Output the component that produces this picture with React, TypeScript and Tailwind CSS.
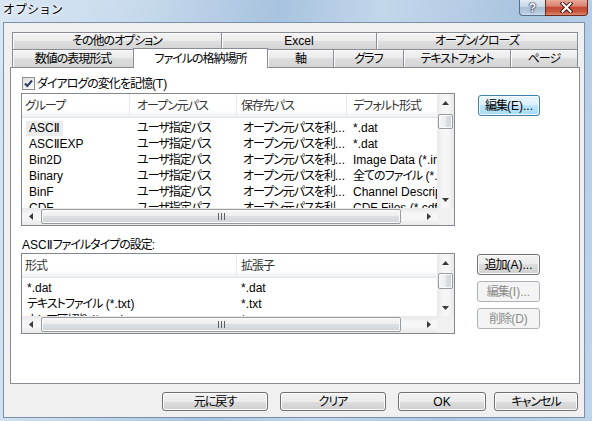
import React from "react";

const F = "font-['Liberation_Sans','Noto_Sans_CJK_JP',sans-serif] [font-feature-settings:'palt'] text-[12px] text-black";

function T({ s }: { s: string }) {
  const parts = s.split(/([\u3000-\u30ff\u4e00-\u9fff\uff01-\uff5e]+)/);
  return (
    <>
      {parts.map((p, i) =>
        i % 2 === 1 ? (
          <span key={i} className="tracking-[-1px]">
            {p}
          </span>
        ) : p.includes("Ⅱ") ? (
          <React.Fragment key={i}>
            {p.split("Ⅱ").map((q, j, arr) => (
              <React.Fragment key={j}>
                {q}
                {j < arr.length - 1 && (
                  <span className="font-['DejaVu_Sans',sans-serif] text-[12px] [font-feature-settings:normal]">Ⅱ</span>
                )}
              </React.Fragment>
            ))}
          </React.Fragment>
        ) : (
          p
        )
      )}
    </>
  );
}

function ArrowUp() {
  return (
    <svg width="7" height="4" viewBox="0 0 7 4">
      <path d="M0 4 L3.5 0 L7 4 Z" fill="#3a3a3a" />
    </svg>
  );
}
function ArrowDown() {
  return (
    <svg width="7" height="4" viewBox="0 0 7 4">
      <path d="M0 0 L3.5 4 L7 0 Z" fill="#3a3a3a" />
    </svg>
  );
}
function ArrowLeft() {
  return (
    <svg width="4" height="7" viewBox="0 0 4 7">
      <path d="M4 0 L0 3.5 L4 7 Z" fill="#3a3a3a" />
    </svg>
  );
}
function ArrowRight() {
  return (
    <svg width="4" height="7" viewBox="0 0 4 7">
      <path d="M0 0 L4 3.5 L0 7 Z" fill="#3a3a3a" />
    </svg>
  );
}

function VScroll({ thumb }: { thumb: string }) {
  return (
    <div className="w-[17px] h-full flex flex-col bg-[linear-gradient(90deg,#e8e8e8,#f6f6f6_35%,#f6f6f6_65%,#e8e8e8)]">
      <div className="h-[17px] shrink-0 flex items-center justify-center">
        <ArrowUp />
      </div>
      <div className="flex-1 flex flex-col items-center">
        <div
          className={`w-[15px] shrink-0 ${thumb} rounded-[2px] border border-[#979ca3] bg-[linear-gradient(90deg,#f7f7f7,#ececec_50%,#dcdfe3_50%,#d0d4d9)] shadow-[inset_0_0_0_1px_#fafafa]`}
        />
      </div>
      <div className="h-[17px] shrink-0 flex items-center justify-center">
        <ArrowDown />
      </div>
    </div>
  );
}

function HScroll() {
  return (
    <div className="flex-1 h-full flex bg-[linear-gradient(#e8e8e8,#f6f6f6_35%,#f6f6f6_65%,#e8e8e8)]">
      <div className="w-[17px] flex items-center justify-center">
        <ArrowLeft />
      </div>
      <div className="flex-1 flex items-center">
        <div className="ml-[2px] w-[360px] h-[15px] rounded-[2px] border border-[#979ca3] bg-[linear-gradient(#f7f7f7,#ececec_50%,#dcdfe3_50%,#d0d4d9)] shadow-[inset_0_0_0_1px_#fafafa] flex items-center justify-center gap-[2px]">
          <span className="w-[1px] h-[7px] bg-[#606060]" />
          <span className="w-[1px] h-[7px] bg-[#606060]" />
          <span className="w-[1px] h-[7px] bg-[#606060]" />
        </div>
      </div>
      <div className="w-[17px] flex items-center justify-center">
        <ArrowRight />
      </div>
    </div>
  );
}

const headerBg =
  "h-[24px] shrink-0 flex bg-[linear-gradient(#ffffff,#ffffff_72%,#eef0f3)] border-b border-[#e2e5ea] text-[#333]";

function Btn({
  children,
  variant = "normal",
  className = "",
}: {
  children: React.ReactNode;
  variant?: "normal" | "focused" | "disabled";
  className?: string;
}) {
  const v =
    variant === "focused"
      ? "border-[#3c7fb1] bg-[linear-gradient(#eaf6fd,#d9f0fc_50%,#bee6fd_50%,#a7d9f5)] shadow-[inset_0_0_0_1px_#f4fbff] text-black"
      : variant === "disabled"
      ? "border-[#adb2b5] bg-[#f4f4f4] text-[#8a8a8a]"
      : "border-[#707070] bg-[linear-gradient(#f2f2f2,#ebebeb_50%,#dddddd_50%,#cfcfcf)] shadow-[inset_0_0_0_1px_#fbfbfb] text-black";
  return (
    <div className={`rounded-[3px] border flex items-center justify-center leading-none whitespace-nowrap ${v} ${className}`}>
      {children}
    </div>
  );
}

function Tab({ label, className }: { label: string; className: string }) {
  return (
    <div
      className={`h-full flex items-center justify-center border border-b-0 border-[#898c95] bg-[linear-gradient(#f3f3f3,#ebebeb_50%,#dedede_50%,#d4d4d4)] shadow-[inset_1px_1px_0_#fdfdfd] leading-none whitespace-nowrap ${className}`}
    >
      <T s={label} />
    </div>
  );
}

const rows1 = [
  ["ASCⅡ", "ユーザ指定パス", "オープン元パスを利...", "*.dat"],
  ["ASCⅡEXP", "ユーザ指定パス", "オープン元パスを利...", "*.dat"],
  ["Bin2D", "ユーザ指定パス", "オープン元パスを利...", "Image Data (*.img)"],
  ["Binary", "ユーザ指定パス", "オープン元パスを利...", "全てのファイル (*.*)"],
  ["BinF", "ユーザ指定パス", "オープン元パスを利...", "Channel Description"],
  ["CDF", "ユーザ指定パス", "オープン元パスを利...", "CDF Files (*.cdf)"],
];

const rows2 = [
  ["*.dat", "*.dat"],
  ["テキストファイル (*.txt)", "*.txt"],
  ["カンマ区切り (*.csv)", "*.csv"],
];

export default function App() {
  return (
    <div
      className={`w-[592px] h-[421px] flex flex-col overflow-hidden bg-[linear-gradient(100deg,#d9e6f3_0%,#c6d9ec_22%,#a8c3df_42%,#c3d7eb_58%,#abc5e0_78%,#c0d5ea_100%)] ${F}`}
    >
      {/* Title bar */}
      <div className="h-[22px] shrink-0 flex items-start">
        <div className="pl-[3px] pt-[1px] leading-[16px] text-[12px] [font-feature-settings:normal] font-['Noto_Sans_CJK_JP',sans-serif] [text-shadow:0_0_5px_#fff,0_0_3px_#fff]">
          オプション
        </div>
        <div className="flex-1" />
        <div className="flex mr-[4px]">
          <div className="w-[26px] h-[16px] rounded-bl-[4px] border border-t-0 border-r-0 border-[#5a6f8c] bg-[linear-gradient(#e3ebf4,#c9d7e7_45%,#aabfd6_50%,#b3c8de_80%,#cddcec)] flex items-center justify-center">
            <span className="text-white font-bold text-[12px] leading-none font-['Liberation_Sans',sans-serif] [text-shadow:0_0_1px_#223,0_0_1px_#223,0_0_2px_#223]">
              ?
            </span>
          </div>
          <div className="w-[43px] h-[16px] rounded-br-[4px] border border-t-0 border-[#6b2a20] bg-[linear-gradient(#e8a898,#d98470_40%,#c64a34_50%,#c5533b_75%,#df8a6c)] flex items-center justify-center">
            <svg width="13" height="11" viewBox="0 0 13 11">
              <path d="M2.5 1.5 L10.5 9.5 M10.5 1.5 L2.5 9.5" stroke="#4a1710" strokeWidth="4" strokeLinecap="square" />
              <path d="M2.5 1.5 L10.5 9.5 M10.5 1.5 L2.5 9.5" stroke="#ffffff" strokeWidth="2" strokeLinecap="square" />
            </svg>
          </div>
        </div>
      </div>

      {/* Client area */}
      <div className="ml-[3px] mr-[7px] h-[396px] shrink-0 border border-[#7a8fa8] bg-[#f0f0f0] flex flex-col pt-[9px] pl-[6px] pr-[4px]">
        {/* Tabs */}
        <div className="ml-[2px] flex flex-col shrink-0">
          <div className="h-[17px] flex">
            <Tab label="その他のオプション" className="w-[210px]" />
            <Tab label="Excel" className="w-[156px] -ml-px" />
            <Tab label="オープン/クローズ" className="w-[202px] -ml-px" />
          </div>
          <div className="h-[18px] flex items-end">
            <Tab label="数値の表現形式" className="w-[122px]" />
            <div className="relative z-10 w-[135px] h-[20px] -ml-px mb-[-1px] border border-b-0 border-[#898c95] bg-white flex items-center justify-center leading-none">
              <T s="ファイルの格納場所" />
            </div>
            <Tab label="軸" className="w-[67px] -ml-px" />
            <Tab label="グラフ" className="w-[71px] -ml-px" />
            <Tab label="テキストフォント" className="w-[108px] -ml-px" />
            <Tab label="ページ" className="w-[68px] -ml-px" />
          </div>
        </div>

        {/* Panel */}
        <div className="h-[317px] shrink-0 border border-[#898c95] bg-white flex flex-col pl-[10px] pt-[9px]">
          <div className="h-[13px] shrink-0 flex items-center ml-[1px]">
            <div className="w-[13px] h-[13px] border border-[#8e8f8f] bg-[linear-gradient(135deg,#dedede,#fbfbfb)] flex items-center justify-center">
              <svg width="11" height="11" viewBox="0 0 11 11">
                <path d="M2 5.5 L4.3 8 L9 2.5" stroke="#2e3f66" strokeWidth="2" fill="none" />
              </svg>
            </div>
            <span className="ml-[2px] leading-none whitespace-nowrap">
              <T s="ダイアログの変化を記憶(T)" />
            </span>
          </div>

          {/* List 1 row */}
          <div className="mt-[3px] flex shrink-0">
            <div className="w-[434px] h-[133px] border border-[#828790] bg-white flex flex-col">
              <div className="h-[114px] shrink-0 flex">
                <div className="w-[415px] flex flex-col overflow-hidden">
                  <div className={headerBg}>
                    <div className="w-[108px] pl-[3px] flex items-center border-r border-[#e8eaed] shrink-0"><T s="グループ" /></div>
                    <div className="w-[107px] pl-[7px] flex items-center border-r border-[#e8eaed] shrink-0"><T s="オープン元パス" /></div>
                    <div className="w-[110px] pl-[4px] flex items-center border-r border-[#e8eaed] shrink-0"><T s="保存先パス" /></div>
                    <div className="flex-1 pl-[6px] flex items-center whitespace-nowrap"><T s="デフォルト形式" /></div>
                  </div>
                  <div className="pt-[2px] flex flex-col shrink-0">
                    {rows1.map((r, i) => (
                      <div key={i} className="h-[16px] leading-[16px] flex whitespace-nowrap shrink-0">
                        <div className="w-[108px] pl-[4px] overflow-hidden shrink-0">
                          <span className={i === 0 ? "inline-block px-[3px] bg-[#ececec] leading-[15px]" : "inline-block px-[3px]"}>
                            <T s={r[0]} />
                          </span>
                        </div>
                        <div className="w-[107px] pl-[7px] overflow-hidden shrink-0"><T s={r[1]} /></div>
                        <div className="w-[110px] pl-[6px] overflow-hidden shrink-0"><T s={r[2]} /></div>
                        <div className="flex-1 min-w-0 pl-[6px] overflow-hidden"><T s={r[3]} /></div>
                      </div>
                    ))}
                  </div>
                </div>
                <VScroll thumb="mt-[3px] h-[15px]" />
              </div>
              <div className="h-[17px] shrink-0 flex">
                <HScroll />
                <div className="w-[17px] h-full bg-[#f0f0f0]" />
              </div>
            </div>
            <div className="ml-[23px] pt-[2px]">
              <Btn variant="focused" className="w-[62px] h-[21px]">
                <T s="編集(E)..." />
              </Btn>
            </div>
          </div>

          <div className="mt-[10px] h-[17px] shrink-0 flex items-center ml-[1px] whitespace-nowrap">
            <T s="ASCⅡファイルタイプの設定:" />
          </div>

          {/* List 2 row */}
          <div className="flex shrink-0">
            <div className="w-[434px] h-[81px] border border-[#828790] bg-white flex flex-col">
              <div className="h-[62px] shrink-0 flex">
                <div className="w-[415px] flex flex-col overflow-hidden">
                  <div className={headerBg}>
                    <div className="w-[215px] pl-[3px] flex items-center border-r border-[#e8eaed] shrink-0"><T s="形式" /></div>
                    <div className="flex-1 pl-[4px] flex items-center"><T s="拡張子" /></div>
                  </div>
                  <div className="pt-[2px] flex flex-col shrink-0">
                    {rows2.map((r, i) => (
                      <div key={i} className="h-[16px] leading-[16px] flex whitespace-nowrap shrink-0">
                        <div className="w-[215px] pl-[5px] overflow-hidden shrink-0"><T s={r[0]} /></div>
                        <div className="flex-1 pl-[4px] overflow-hidden"><T s={r[1]} /></div>
                      </div>
                    ))}
                  </div>
                </div>
                <VScroll thumb="mt-[2px] h-[16px]" />
              </div>
              <div className="h-[17px] shrink-0 flex">
                <HScroll />
                <div className="w-[17px] h-full bg-[#f0f0f0]" />
              </div>
            </div>
            <div className="ml-[22px] pt-[1px] flex flex-col gap-[6px]">
              <Btn className="w-[63px] h-[21px]"><T s="追加(A)..." /></Btn>
              <Btn variant="disabled" className="w-[63px] h-[21px]">
                <T s="編集(I)..." />
              </Btn>
              <Btn variant="disabled" className="w-[63px] h-[21px]">
                <T s="削除(D)" />
              </Btn>
            </div>
          </div>
        </div>

        {/* Bottom buttons */}
        <div className="mt-[8px] h-[19px] shrink-0 flex justify-end pr-[2px]">
          <Btn className="w-[106px] h-full"><T s="元に戻す" /></Btn>
          <Btn className="w-[106px] h-full ml-[12px]"><T s="クリア" /></Btn>
          <Btn className="w-[88px] h-full ml-[12px]">OK</Btn>
          <Btn className="w-[84px] h-full ml-[8px]"><T s="キャンセル" /></Btn>
        </div>
      </div>
    </div>
  );
}
